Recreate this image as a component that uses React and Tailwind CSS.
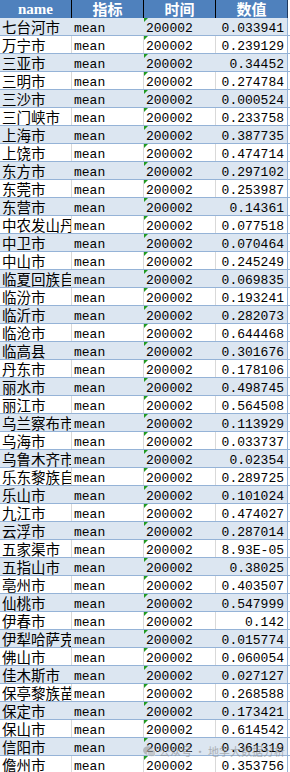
import React from "react";

const rows = [
  ["七台河市", "0.033941"],
  ["万宁市", "0.239129"],
  ["三亚市", "0.34452"],
  ["三明市", "0.274784"],
  ["三沙市", "0.000524"],
  ["三门峡市", "0.233758"],
  ["上海市", "0.387735"],
  ["上饶市", "0.474714"],
  ["东方市", "0.297102"],
  ["东莞市", "0.253987"],
  ["东营市", "0.14361"],
  ["中农发山丹马场", "0.077518"],
  ["中卫市", "0.070464"],
  ["中山市", "0.245249"],
  ["临夏回族自治州", "0.069835"],
  ["临汾市", "0.193241"],
  ["临沂市", "0.282073"],
  ["临沧市", "0.644468"],
  ["临高县", "0.301676"],
  ["丹东市", "0.178106"],
  ["丽水市", "0.498745"],
  ["丽江市", "0.564508"],
  ["乌兰察布市", "0.113929"],
  ["乌海市", "0.033737"],
  ["乌鲁木齐市", "0.02354"],
  ["乐东黎族自治县", "0.289725"],
  ["乐山市", "0.101024"],
  ["九江市", "0.474027"],
  ["云浮市", "0.287014"],
  ["五家渠市", "8.93E-05"],
  ["五指山市", "0.38025"],
  ["亳州市", "0.403507"],
  ["仙桃市", "0.547999"],
  ["伊春市", "0.142"],
  ["伊犁哈萨克自治州", "0.015774"],
  ["佛山市", "0.060054"],
  ["佳木斯市", "0.027127"],
  ["保亭黎族苗族自治县", "0.268588"],
  ["保定市", "0.173421"],
  ["保山市", "0.614542"],
  ["信阳市", "0.361319"],
  ["儋州市", "0.353756"],
];

function Row({ name, value, blue }) {
  const bg = blue ? "bg-[#dce6f1]" : "bg-white";
  const vb = blue ? "border-r-[#dce6f1]" : "border-r-[#d9d9d9]";
  return (
    <div className={`flex h-[18px] border-b border-b-[#95b3d7] ${bg}`}>
      <div
        className={`w-[72px] shrink-0 border-r ${vb} overflow-hidden whitespace-nowrap pl-[2px] font-['Noto_Sans_CJK_SC','Noto_Sans',sans-serif] text-[14.5px] leading-[17px] text-black`}
      >
        {name}
      </div>
      <div
        className={`w-[72px] shrink-0 border-r ${vb} overflow-hidden whitespace-nowrap pl-[2px] pt-[4px] font-['Liberation_Mono','DejaVu_Sans_Mono',monospace] text-[13px] leading-[13px] text-black`}
      >
        mean
      </div>
      <div
        className={`relative w-[72px] shrink-0 border-r ${vb} overflow-hidden whitespace-nowrap pl-[2px] pt-[4px] font-['Liberation_Mono','DejaVu_Sans_Mono',monospace] text-[13px] leading-[13px] text-black`}
      >
        <svg className="absolute left-0 top-0" width="4" height="4" viewBox="0 0 4 4">
          <polygon points="0,0 4,0 0,4" fill="#1f9a1f" />
        </svg>
        200002
      </div>
      <div className="w-[72px] shrink-0 overflow-hidden whitespace-nowrap border-r border-r-[#95b3d7] pr-[3px] pt-[4px] text-right font-['Liberation_Mono','DejaVu_Sans_Mono',monospace] text-[13px] leading-[13px] text-black">
        {value}
      </div>
      <div className="flex-1 bg-white" />
    </div>
  );
}

export default function App() {
  return (
    <div className="relative h-[772px] w-[290px] overflow-hidden bg-white">
      <div className="flex h-[18px] bg-[#4f81bd] text-white">
        <div className="flex w-[72px] shrink-0 items-center justify-center border-r border-r-black font-['Liberation_Serif','DejaVu_Serif',serif] text-[15px] font-bold leading-[18px]">
          name
        </div>
        <div className="flex w-[72px] shrink-0 items-center justify-center border-r border-r-black font-['Noto_Sans_CJK_SC','Noto_Sans',sans-serif] text-[15px] font-bold leading-[18px]">
          指标
        </div>
        <div className="flex w-[72px] shrink-0 items-center justify-center border-r border-r-black font-['Noto_Sans_CJK_SC','Noto_Sans',sans-serif] text-[15px] font-bold leading-[18px]">
          时间
        </div>
        <div className="flex w-[72px] shrink-0 items-center justify-center border-r border-r-[#1f3a5f] font-['Noto_Sans_CJK_SC','Noto_Sans',sans-serif] text-[15px] font-bold leading-[18px]">
          数值
        </div>
        <div className="flex-1 bg-white" />
      </div>
      {rows.map((r, i) => (
        <Row key={i} name={r[0]} value={r[1]} blue={i % 2 === 0} />
      ))}
      <div className="absolute left-[143px] top-[745px] flex items-center gap-[3px] opacity-60">
        <svg width="13" height="11" viewBox="0 0 13 11">
          <ellipse cx="5" cy="4.5" rx="5" ry="4.2" fill="#9a9a9a" />
          <ellipse cx="8.5" cy="7" rx="4.2" ry="3.6" fill="#b5b5b5" stroke="#fff" strokeWidth="0.6" />
        </svg>
        <span className="font-['Noto_Sans_CJK_SC','Noto_Sans',sans-serif] text-[11px] leading-[12px] text-[#8a8a8a]">
          公众号 · 地学大数据分析
        </span>
      </div>
    </div>
  );
}
